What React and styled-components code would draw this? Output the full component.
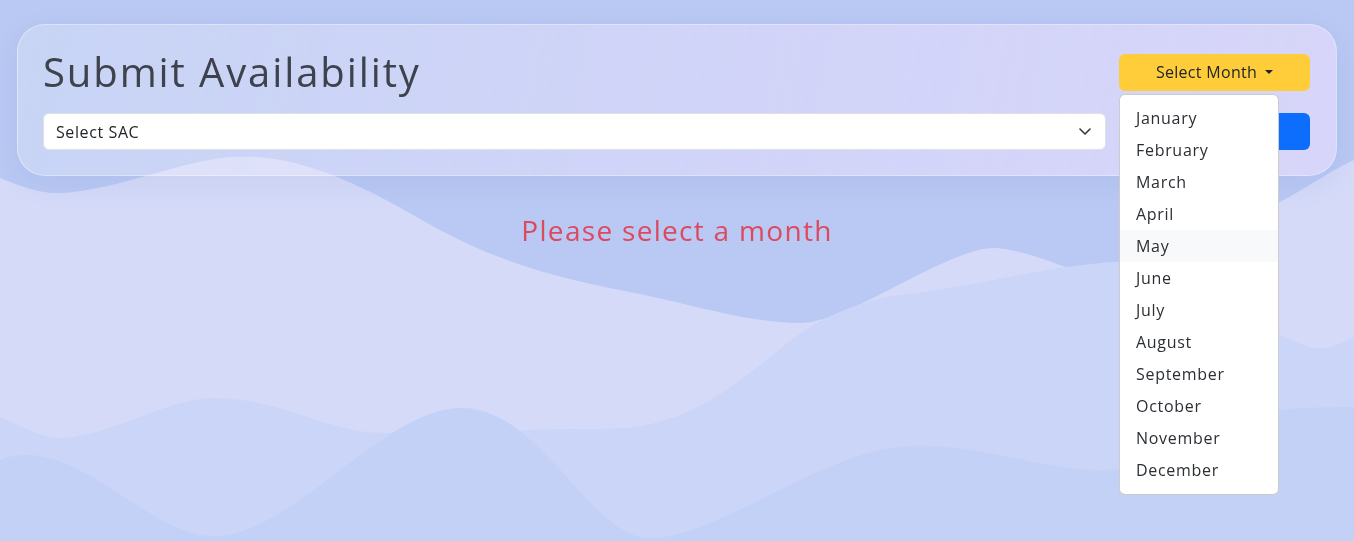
import React from 'react';
import styled, { createGlobalStyle } from 'styled-components';

const months = [
  'January', 'February', 'March', 'April', 'May', 'June',
  'July', 'August', 'September', 'October', 'November', 'December',
];

const GlobalStyle = createGlobalStyle`
  * { box-sizing: border-box; }
  body {
    margin: 0;
    background: #b9c9f3;
    font-family: 'Open Sans', 'DejaVu Sans', sans-serif;
    color: #212529;
  }
`;

const Waves = () => (
  <Backdrop viewBox="0 0 1354 541" preserveAspectRatio="none">
    <path
      fill="#d4daf8"
      d="M0,178 C20,186 40,194 60,193 C120,190 180,160 233,157 C320,152 400,210 450,235 C500,262 560,278 620,290 C690,303 740,322 800,323 C850,323 950,245 997,248 C1030,252 1050,262 1080,272 C1150,290 1230,230 1280,202 C1310,186 1335,168 1354,160 L1354,541 L0,541 Z"
    />
    <path
      fill="#cbd5f7"
      d="M0,417 C25,428 45,440 67,438 C120,432 170,398 213,398 C280,398 330,433 383,433 C440,433 500,432 530,430 C580,428 620,430 637,427 C690,418 720,395 750,373 C770,358 795,335 817,323 C850,305 880,298 900,295 C960,288 1030,272 1067,267 C1090,264 1105,262 1120,262 C1200,270 1250,330 1313,348 C1330,350 1345,342 1354,337 L1354,541 L0,541 Z"
    />
    <path
      fill="#c4d1f7"
      d="M0,460 C10,456 18,455 27,455 C90,455 150,532 210,536 C290,540 380,410 460,408 C540,406 590,538 650,538 C720,538 820,450 910,446 C980,443 1040,470 1100,470 C1180,470 1240,410 1300,408 C1320,407 1340,407 1354,407 L1354,541 L0,541 Z"
    />
  </Backdrop>
);

const Chevron = () => (
  <svg width="12" height="7" viewBox="0 0 12 7" fill="none">
    <polyline points="1,1 6,6 11,1" stroke="#343a40" strokeWidth="1.6" strokeLinecap="round" strokeLinejoin="round" />
  </svg>
);

const App = () => {
  return (
    <Page>
      <GlobalStyle />
      <Waves />
      <Card>
        <TopRow>
          <Title>Submit Availability</Title>
          <DropdownWrap>
            <MonthButton>
              Select Month
              <Caret />
            </MonthButton>
            <Menu>
              {months.map((m) => (
                <MenuItem key={m} $active={m === 'May'}>{m}</MenuItem>
              ))}
            </Menu>
          </DropdownWrap>
        </TopRow>
        <FormRow>
          <SelectBox>
            <span>Select SAC</span>
            <Chevron />
          </SelectBox>
          <SubmitButton>Submit</SubmitButton>
        </FormRow>
      </Card>
      <Message>Please select a month</Message>
    </Page>
  );
};

const Page = styled.div`
  position: relative;
  min-height: 100vh;
  padding: 24px 17px;
`;

const Backdrop = styled.svg`
  position: fixed;
  inset: 0;
  width: 100%;
  height: 100%;
  z-index: 0;
`;

const Card = styled.div`
  position: relative;
  z-index: 2;
  padding: 23px 26px 25px 25px;
  border-radius: 28px;
  border: 1px solid rgba(255, 255, 255, 0.35);
  background: linear-gradient(100deg, rgba(255, 255, 255, 0.22) 0%, rgba(240, 226, 255, 0.45) 60%, rgba(240, 224, 255, 0.55) 100%);
  box-shadow: 0 8px 32px rgba(31, 38, 135, 0.06);
`;

const TopRow = styled.div`
  display: flex;
  justify-content: space-between;
  align-items: center;
`;

const Title = styled.h1`
  margin: 0;
  font-size: 40px;
  line-height: 48px;
  font-weight: 400;
  letter-spacing: 1.9px;
  color: #3d424c;
`;

const DropdownWrap = styled.div`
  position: relative;
  width: 191px;
`;

const MonthButton = styled.button`
  width: 100%;
  height: 37px;
  display: flex;
  align-items: center;
  justify-content: center;
  border: 1px solid #ffcd39;
  border-radius: 6px;
  background: #ffcd39;
  color: #212529;
  font-family: inherit;
  font-size: 16px;
  letter-spacing: 0.3px;
`;

const Caret = styled.span`
  margin-left: 8px;
  width: 0;
  height: 0;
  border-top: 4.8px solid #212529;
  border-left: 4.8px solid transparent;
  border-right: 4.8px solid transparent;
`;

const Menu = styled.ul`
  position: absolute;
  top: calc(100% + 3px);
  left: 0;
  z-index: 5;
  width: 160px;
  margin: 0;
  padding: 7px 0 8px;
  list-style: none;
  background: #fff;
  border: 1px solid rgba(0, 0, 0, 0.2);
  border-radius: 6px;
`;

const MenuItem = styled.li`
  padding: 4px 16px;
  font-size: 16px;
  line-height: 24px;
  letter-spacing: 0.7px;
  color: #2b2f33;
  background: ${(p) => (p.$active ? '#f8f9fa' : 'transparent')};
`;

const FormRow = styled.div`
  display: flex;
  gap: 13px;
  margin-top: 17px;
`;

const SelectBox = styled.div`
  flex: 1;
  height: 37px;
  display: flex;
  align-items: center;
  justify-content: space-between;
  padding: 0 14px 0 12px;
  background: #fff;
  border: 1px solid #dee2e6;
  border-radius: 6px;
  font-size: 16px;
  letter-spacing: 0.6px;
  color: #212529;
`;

const SubmitButton = styled.button`
  width: 191px;
  height: 37px;
  border: none;
  border-radius: 6px;
  background: #0d6efd;
  color: #fff;
  font-family: inherit;
  font-size: 16px;
`;

const Message = styled.p`
  position: relative;
  z-index: 1;
  margin: 37px 0 0;
  text-align: center;
  font-size: 28px;
  line-height: 34px;
  letter-spacing: 1.3px;
  color: #dc4a5f;
`;

export default App;
